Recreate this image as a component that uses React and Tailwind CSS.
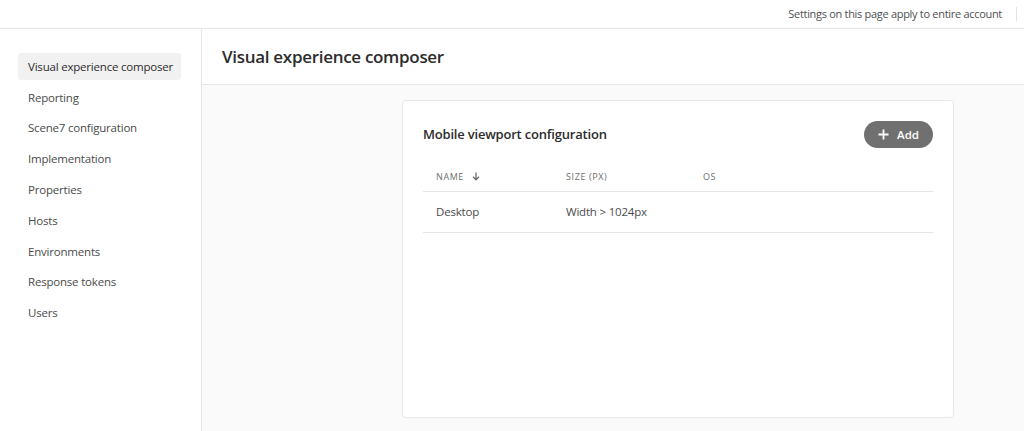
import React from "react";

const font = { fontFamily: '"Open Sans", "Liberation Sans", sans-serif' };

const navItems = [
  "Visual experience composer",
  "Reporting",
  "Scene7 configuration",
  "Implementation",
  "Properties",
  "Hosts",
  "Environments",
  "Response tokens",
  "Users",
];

export default function App() {
  return (
    <div className="w-[1024px] h-[431px] overflow-hidden bg-white flex flex-col text-[#4b4b4b]" style={font}>
      <div className="h-[29px] shrink-0 border-b border-[#e6e6e6] flex items-center justify-end pr-[7px]">
        <span className="text-[11px] tracking-[-0.3px] text-[#505050]">Settings on this page apply to entire account</span>
        <span className="ml-[14px] w-px h-[14px] bg-[#e2e2e2]" />
      </div>
      <div className="flex flex-1 min-h-0">
        <aside className="w-[202px] shrink-0 border-r border-[#e8e8e8] pt-[24px] pl-[18px] pr-[20px]">
          {navItems.map((item, i) => (
            <div
              key={item}
              className={`h-[27px] mb-[3.8px] flex items-center pl-[10px] rounded-[3px] text-[11.5px] tracking-[-0.2px] ${
                i === 0 ? "bg-[#f1f1f1] text-[#2c2c2c]" : "text-[#4b4b4b]"
              }`}
            >
              {item}
            </div>
          ))}
        </aside>
        <main className="flex-1 flex flex-col bg-[#fafafa]">
          <div className="h-[56px] shrink-0 bg-white border-b border-[#e6e6e6] flex items-center pl-[20px]">
            <h1 className="text-[17px] font-semibold text-[#2c2c2c] tracking-[-0.3px]">Visual experience composer</h1>
          </div>
          <div className="flex-1 pt-[15px] pl-[200px] pr-[70px]">
            <div className="h-[318px] bg-white border border-[#e8e8e8] rounded-[4px] px-[20px] pt-[20px]">
              <div className="flex items-center justify-between">
                <h2 className="text-[13px] font-semibold text-[#2c2c2c] tracking-[-0.2px]">Mobile viewport configuration</h2>
                <button className="h-[27px] w-[69px] rounded-full bg-[#707070] text-white flex items-center justify-center gap-[8px] text-[11.5px] font-semibold">
                  <svg width="11" height="11" viewBox="0 0 11 11" fill="none">
                    <path d="M5.5 0.5v10M0.5 5.5h10" stroke="white" strokeWidth="1.8" />
                  </svg>
                  Add
                </button>
              </div>
              <div className="mt-[14px] h-[30px] border-b border-[#e6e6e6] flex items-center text-[9px] tracking-[0.6px] text-[#6e6e6e]">
                <div className="w-[130px] pl-[13px] flex items-center gap-[8px]">
                  NAME
                  <svg width="8" height="9" viewBox="0 0 8 9" fill="none">
                    <path d="M4 0.5v7M1 4.8L4 7.8 7 4.8" stroke="#6e6e6e" strokeWidth="1.3" />
                  </svg>
                </div>
                <div className="w-[137px] pl-[13px]">SIZE (PX)</div>
                <div className="pl-[13px]">OS</div>
              </div>
              <div className="h-[41px] border-b border-[#e6e6e6] flex items-center text-[11.5px] text-[#4b4b4b] tracking-[-0.2px]">
                <div className="w-[130px] pl-[13px]">Desktop</div>
                <div className="pl-[13px]">Width &gt; 1024px</div>
              </div>
            </div>
          </div>
        </main>
      </div>
    </div>
  );
}
